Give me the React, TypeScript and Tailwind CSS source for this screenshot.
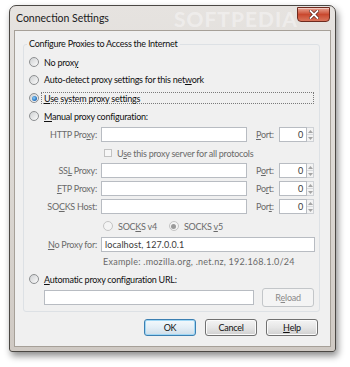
import type { ReactNode } from 'react'

// Win7 style "Connection Settings" dialog

function Radio({ checked = false, disabled = false }: { checked?: boolean; disabled?: boolean }) {
  return (
    <span
      className={`flex h-[10px] w-[10px] shrink-0 items-center justify-center rounded-full border ${
        disabled ? 'border-[#c4c4c4] bg-[#f4f4f4]' : 'border-[#8d8f91] bg-gradient-to-br from-[#cfd1d3] to-[#fbfbfb]'
      }`}
    >
      {checked && (
        <span
          className={`h-[5px] w-[5px] rounded-full ${
            disabled ? 'bg-[#9a9a9a]' : 'bg-[radial-gradient(circle_at_40%_40%,#8fd0f7_0%,#2a76c4_60%,#1a4f96_100%)]'
          }`}
        />
      )}
    </span>
  )
}

function Label({ children, muted = false }: { children: ReactNode; muted?: boolean }) {
  return <span className={`whitespace-nowrap ${muted ? 'text-[#6a6a6a]' : 'text-[#111]'}`}>{children}</span>
}

function U({ children }: { children: ReactNode }) {
  return <span className="underline decoration-1 underline-offset-[1px]">{children}</span>
}

function Input({ className = '', value = '' }: { className?: string; value?: string }) {
  return (
    <div className={`flex h-[15px] items-center border border-[#b8bcc2] bg-white px-[3px] ${className}`}>
      {value && <span className="whitespace-nowrap tracking-[0.1px] text-[#3a3a3a]">{value}</span>}
    </div>
  )
}

function PortBox() {
  return (
    <div className="flex h-[15px] items-stretch">
      <div className="flex w-[28px] items-center justify-end border border-[#b8bcc2] bg-white pr-[3px] text-[#3a3a3a]">0</div>
      <div className="flex w-[7px] flex-col border-y border-r border-[#cfd2d6] bg-[#f3f3f3]">
        <div className="flex flex-1 items-center justify-center border-b border-[#d8dadd]">
          <svg width="5" height="3" viewBox="0 0 5 3">
            <path d="M0 3 L2.5 0 L5 3 Z" fill="#a4a4a4" />
          </svg>
        </div>
        <div className="flex flex-1 items-center justify-center">
          <svg width="5" height="3" viewBox="0 0 5 3">
            <path d="M0 0 L2.5 3 L5 0 Z" fill="#a4a4a4" />
          </svg>
        </div>
      </div>
    </div>
  )
}

function ProxyRow({ label, port, h }: { label: ReactNode; port: ReactNode; h: string }) {
  return (
    <div className={`flex items-center ${h}`}>
      <div className="w-[73px] text-right">
        <Label muted>{label}</Label>
      </div>
      <Input className="ml-[4px] w-[146px]" />
      <div className="ml-[9px] w-[23px]">
        <Label muted>{port}</Label>
      </div>
      <PortBox />
    </div>
  )
}

function Button({ children, primary = false, disabled = false, className = '' }: { children: ReactNode; primary?: boolean; disabled?: boolean; className?: string }) {
  const skin = disabled
    ? 'border-[#c3c6c9] bg-[#f4f4f4] text-[#8a8a8a]'
    : primary
    ? 'border-[#3c7fb1] bg-gradient-to-b from-[#f4f9fc] via-[#e3eef6] to-[#cfdde8] text-[#111] shadow-[inset_0_0_0_1px_#9fd7f5]'
    : 'border-[#707070] bg-gradient-to-b from-[#f4f4f4] via-[#e6e6e6] to-[#cfcfcf] text-[#111] shadow-[inset_0_0_0_1px_#fbfbfb]'
  return (
    <div className={`flex w-[52px] items-center justify-center rounded-[3px] border ${skin} ${className}`}>{children}</div>
  )
}

export default function App() {
  return (
    <div className="h-[367px] w-[350px] overflow-hidden bg-white pl-[9px] pt-[5px] font-['Lato',sans-serif] text-[9px] leading-none tracking-[-0.25px]">
      <div className="flex h-[347px] w-[327px] flex-col rounded-t-[7px] rounded-b-[3px] border border-[#4b4844] bg-gradient-to-b from-[#e6e3e0] via-[#dcd8d3] to-[#cfc9c3] px-[4px] pb-[4px] shadow-[2px_4px_7px_rgba(0,0,0,0.45)]">
        {/* title bar */}
        <div className="relative flex h-[24px] shrink-0 items-center pl-[2px]">
          <span className="text-[10.5px] tracking-normal text-[#202020]">Connection Settings</span>
          <span className="pointer-events-none absolute left-[160px] top-[2px] text-[21px] font-bold tracking-[1px] text-white/40">
            SOFTPEDIA
          </span>
          <div className="absolute right-[1px] top-[1px] flex h-[15px] w-[33px] items-center justify-center rounded-b-[4px] border border-[#6e2a1e] bg-gradient-to-b from-[#e8a392] via-[#c9492f] to-[#d9745b] shadow-[inset_0_1px_0_rgba(255,255,255,0.45)]">
            <svg width="10" height="9" viewBox="0 0 10 9">
              <path d="M1.5 1 L8.5 8 M8.5 1 L1.5 8" stroke="#5a1f16" strokeWidth="3.2" strokeLinecap="square" />
              <path d="M1.5 1 L8.5 8 M8.5 1 L1.5 8" stroke="#ffffff" strokeWidth="1.8" strokeLinecap="square" />
            </svg>
          </div>
        </div>

        {/* client area */}
        <div className="flex flex-1 flex-col border border-[#a6a098] bg-[#f0f0f0]">
          <div className="relative ml-[8px] mr-[10px] mt-[13px] rounded-[3px] border border-[#dde1e5] pb-[5px] pt-[8px]">
            <span className="absolute -top-[6px] left-[3px] bg-[#f0f0f0] px-[2px] text-[#111]">
              Configure Proxies to Access the Internet
            </span>

            <div className="flex h-[18px] items-center gap-[5px] pl-[5px]">
              <Radio />
              <Label>
                No prox<U>y</U>
              </Label>
            </div>
            <div className="flex h-[17px] items-center gap-[5px] pl-[5px]">
              <Radio />
              <Label>
                Auto-detect proxy settings for this net<U>w</U>ork
              </Label>
            </div>
            <div className="flex h-[20px] items-center gap-[2px] pl-[5px]">
              <Radio checked />
              <div className="flex h-[12px] w-[273px] items-center border border-dotted border-[#7a7a7a] pl-[2px]">
                <Label>
                  <U>U</U>se system proxy settings
                </Label>
              </div>
            </div>
            <div className="flex h-[16px] items-center gap-[5px] pl-[5px]">
              <Radio />
              <Label>
                <U>M</U>anual proxy configuration:
              </Label>
            </div>

            <ProxyRow
              h="h-[21px]"
              label={
                <>
                  HTTP Pro<U>x</U>y:
                </>
              }
              port={
                <>
                  <U>P</U>ort:
                </>
              }
            />
            <div className="flex h-[16px] items-center gap-[5px] pl-[80px]">
              <span className="h-[8px] w-[8px] border border-[#c2c2c2] bg-[#f7f7f7]" />
              <Label muted>
                U<U>s</U>e this proxy server for all protocols
              </Label>
            </div>
            <ProxyRow
              h="h-[19px]"
              label={
                <>
                  SS<U>L</U> Proxy:
                </>
              }
              port={
                <>
                  P<U>o</U>rt:
                </>
              }
            />
            <ProxyRow
              h="h-[17px]"
              label={
                <>
                  <U>F</U>TP Proxy:
                </>
              }
              port={
                <>
                  Po<U>r</U>t:
                </>
              }
            />
            <ProxyRow
              h="h-[19px]"
              label={
                <>
                  SO<U>C</U>KS Host:
                </>
              }
              port={
                <>
                  Por<U>t</U>:
                </>
              }
            />

            <div className="flex h-[20px] items-center pl-[79px]">
              <Radio disabled />
              <span className="ml-[5px]">
                <Label muted>
                  SOC<U>K</U>S v4
                </Label>
              </span>
              <span className="ml-[12px]">
                <Radio checked disabled />
              </span>
              <span className="ml-[5px]">
                <Label muted>
                  SOCKS <U>v</U>5
                </Label>
              </span>
            </div>

            <div className="flex h-[17px] items-center">
              <div className="w-[73px] text-right">
                <Label muted>
                  <U>N</U>o Proxy for:
                </Label>
              </div>
              <Input className="ml-[4px] w-[214px]" value="localhost, 127.0.0.1" />
            </div>
            <div className="flex h-[16px] items-center pl-[79px] tracking-[0.25px]">
              <Label muted>Example: .mozilla.org, .net.nz, 192.168.1.0/24</Label>
            </div>

            <div className="flex h-[20px] items-center gap-[5px] pl-[5px]">
              <Radio />
              <Label>
                <U>A</U>utomatic proxy configuration URL:
              </Label>
            </div>
            <div className="flex h-[17px] items-center pl-[20px]">
              <Input className="w-[210px]" />
              <Button disabled className="ml-[8px] h-[19px]">
                R<U>e</U>load
              </Button>
            </div>
          </div>

          <div className="mt-[7px] flex justify-end gap-[9px] pr-[12px]">
            <Button primary className="h-[17px]">
              OK
            </Button>
            <Button className="h-[17px]">Cancel</Button>
            <Button className="h-[17px]">
              <U>H</U>elp
            </Button>
          </div>
        </div>
      </div>
    </div>
  )
}
